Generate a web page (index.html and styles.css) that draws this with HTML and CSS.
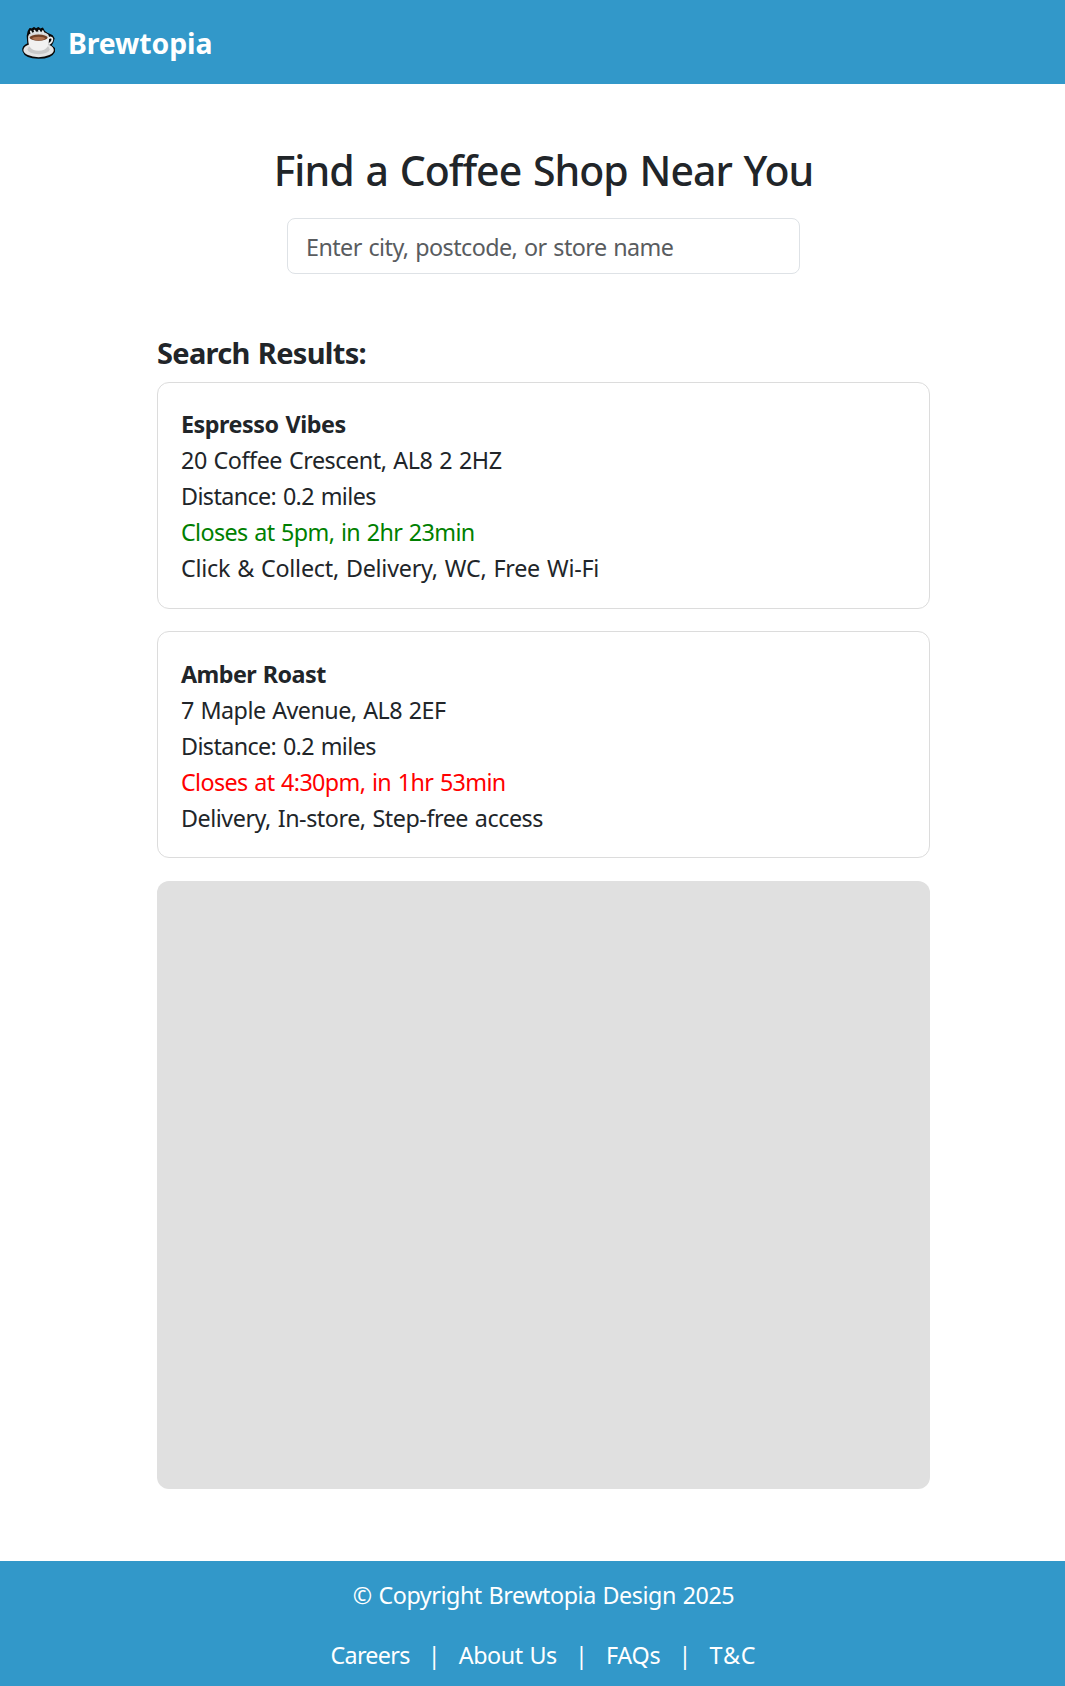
FILE: index.html
```
<!DOCTYPE html>
<html lang="en">
<head>
<meta charset="utf-8">
<title>Brewtopia</title>
<link rel="stylesheet" href="styles.css">
</head>
<body>
<div class="page">
  <header class="navbar">
    <svg class="logo" viewBox="0 0 36 36" aria-hidden="true">
      <path class="outline" d="M7.6 6.5 9 4 11 4.6 13 3 15 4.6 17.3 3 19 4.6 21.5 3.6 23 6.5 26.5 9 31 11 32.6 13.5 31.5 17 29.5 20.5 33 23.5 33 26.5C31 31 25 32.8 17.5 32.8S4 31 2.4 26C1.6 23 4 20.5 7.3 19L6.7 11Z"/>
      <ellipse class="saucer" cx="17.6" cy="25" rx="15.2" ry="7.2"/>
      <ellipse class="saucer-shade" cx="17.6" cy="24.2" rx="11" ry="5"/>
      <path class="handle" d="M27 13.5C32.5 10 33 16.5 27.3 19.5"/>
      <path class="cup" d="M7.2 12C7 20 8.5 25.8 17.6 25.8S28.2 20 28 12Z"/>
      <ellipse class="rim" cx="17.6" cy="11.2" rx="10.4" ry="4.6"/>
      <ellipse class="coffee" cx="17.6" cy="12.6" rx="9" ry="3.1"/>
      <ellipse class="crema" cx="17.6" cy="13.5" rx="6.4" ry="1.7"/>
      <path class="steam" d="M9.8 6.4 10.3 8M13.5 5.6 14.6 8M18 5.6 18.8 8M21.8 6.2 22.4 8"/>
    </svg>
    <span class="brand">Brewtopia</span>
  </header>
  <main class="main">
    <h1 class="title">Find a Coffee Shop Near You</h1>
    <input class="search" type="text" placeholder="Enter city, postcode, or store name">
    <section class="results">
      <h2 class="heading">Search Results:</h2>
      <article class="card">
        <p class="name espresso">Espresso Vibes</p>
        <p class="address">20 Coffee Crescent, AL8 2 2HZ</p>
        <p class="distance">Distance: 0.2 miles</p>
        <p class="hours open">Closes at 5pm, in 2hr 23min</p>
        <p class="services">Click &amp; Collect, Delivery, WC, Free Wi-Fi</p>
      </article>
      <article class="card second">
        <p class="name">Amber Roast</p>
        <p class="address maple">7 Maple Avenue, AL8 2EF</p>
        <p class="distance">Distance: 0.2 miles</p>
        <p class="hours closing">Closes at 4:30pm, in 1hr 53min</p>
        <p class="services short">Delivery, In-store, Step-free access</p>
      </article>
      <div class="map"></div>
    </section>
  </main>
  <footer class="footer">
    <p class="copyright">© Copyright Brewtopia Design 2025</p>
    <nav class="links">
      <a class="link careers">Careers</a><span class="bar">|</span>
      <a class="link about">About Us</a><span class="bar">|</span>
      <a class="link faqs">FAQs</a><span class="bar">|</span>
      <a class="link terms">T&amp;C</a>
    </nav>
  </footer>
</div>
</body>
</html>
```
FILE: styles.css
```
* { box-sizing: border-box; }
html { overflow: hidden; }
body {
  margin: 0;
  background: #fff;
  color: #212529;
  font: 400 23.3px/36px "Segoe UI", "Noto Sans", sans-serif;
  word-spacing: 1.2px;
}
p, h1, h2 { margin: 0; }
.page { display: flex; flex-direction: column; width: 1087px; height: 1686px; }

.navbar {
  display: flex;
  align-items: center;
  height: 84px;
  padding: 2px 0 0 21px;
  gap: 11px;
  background: #3298c9;
}
.logo { width: 36px; height: 36px; }
.outline { fill: #080808; stroke: #080808; stroke-width: 2; stroke-linejoin: round; }
.saucer { fill: #e3e3e3; }
.saucer-shade { fill: #c9c9c9; }
.handle { fill: none; stroke: #eee; stroke-width: 1.8; }
.cup { fill: #f1f1f1; }
.rim { fill: #dadada; }
.coffee { fill: #704026; }
.crema { fill: #ad7150; }
.steam { fill: none; stroke: #e3e8eb; stroke-width: 1.8; stroke-linecap: round; }
.brand { color: #fff; font-size: 28.4px; font-weight: 700; letter-spacing: -.1px; }

.main { display: flex; flex-direction: column; align-items: center; height: 1477px; padding-top: 61px; }
.title { height: 50px; font-size: 41px; font-weight: 500; line-height: 50px; letter-spacing: -1px; word-spacing: 2.2px; }
.search {
  width: 513px;
  height: 56px;
  margin-top: 23px;
  padding: 1px 18px 0;
  border: 1px solid #dee2e6;
  border-radius: 8px;
  background: #fff;
  color: #212529;
  font: inherit;
  letter-spacing: -.55px;
  word-spacing: inherit;
}
.search::placeholder { color: #595c5f; opacity: 1; }

.results { display: flex; flex-direction: column; width: 773px; margin-top: 61px; }
.heading { height: 47px; font-size: 29px; font-weight: 700; line-height: 36px; letter-spacing: -.68px; }
.card {
  height: 227px;
  margin-bottom: 22px;
  padding: 23px;
  border: 1px solid #dcdcdc;
  border-radius: 12px;
}
.second { padding-top: 24px; }
.name { font-weight: 700; letter-spacing: -.55px; }
.espresso { letter-spacing: -.45px; }
.address { letter-spacing: -.44px; }
.maple { letter-spacing: -.54px; }
.distance { letter-spacing: -.6px; }
.hours { letter-spacing: -.62px; }
.open { color: #008000; }
.closing { color: #f00; }
.services { letter-spacing: -.24px; }
.short { letter-spacing: -.45px; }
.map { height: 608px; margin-top: 1px; border-radius: 12px; background: #e0e0e0; }

.footer {
  display: flex;
  flex-direction: column;
  align-items: center;
  height: 125px;
  padding-top: 16px;
  gap: 24px;
  background: #3298c9;
  color: #fff;
}
.copyright { letter-spacing: -.45px; }
.links { display: flex; width: 426px; justify-content: space-between; }
.bar { display: flex; justify-content: center; width: 6px; }
.careers { letter-spacing: -.7px; }
.about { letter-spacing: -.45px; }
.faqs { letter-spacing: -.23px; }
.terms { letter-spacing: .9px; }
```
